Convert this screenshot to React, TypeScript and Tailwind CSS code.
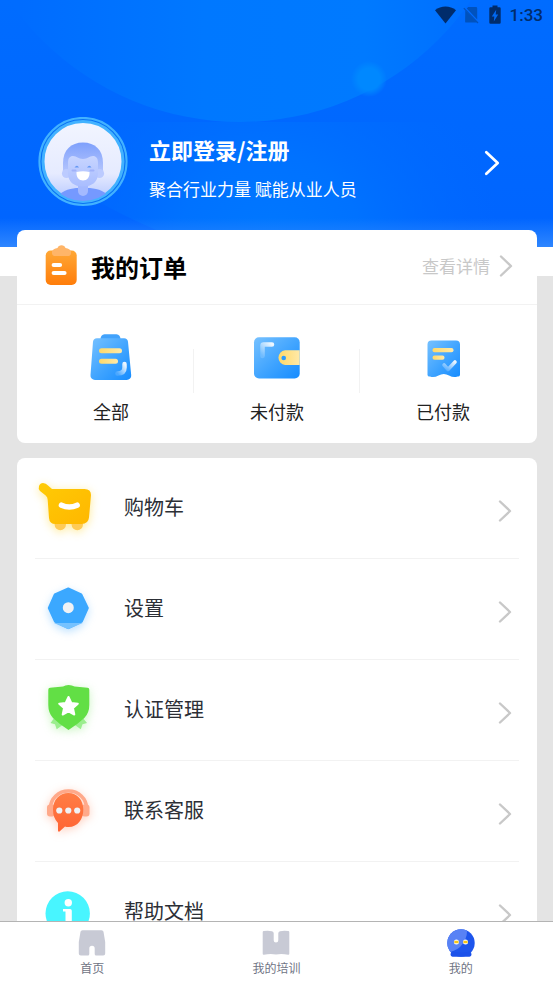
import React from 'react';

type IconProps = { className?: string };

const Chevron = ({ className }: IconProps) => (
  <svg viewBox="0 0 14 24" fill="none" stroke="currentColor" strokeLinecap="round" strokeLinejoin="round" className={className} aria-hidden="true">
    <path d="M2 2.5 12 12 2 21.5" strokeWidth="2.4" />
  </svg>
);

const StatusBar = () => (
  <div className="flex h-[30px] items-center justify-end pr-[10px] text-[#002c6b]">
    <svg viewBox="0 0 22 18" className="h-[18px] w-[22px]" fill="currentColor" aria-hidden="true">
      <path d="M10.500 17.500 0 4.200C6-.8 15-.8 21 4.200Z" />
    </svg>
    <svg viewBox="0 0 16 18" className="ml-[6px] h-[18px] w-4 text-[#0052bd]" fill="currentColor" aria-hidden="true">
      <path d="M5.200 1H13a1.200 1.200 0 0 1 1.200 1.200V13.500L3.800 2.500ZM2.300 4.500 13.800 16.300a1 1 0 0 1-.8.300H3.300a1.200 1.200 0 0 1-1.200-1.200Z" />
      <path d="M.8 2.200 15 17" stroke="currentColor" strokeWidth="1.200" />
    </svg>
    <svg viewBox="0 0 14 20" className="ml-[9px] h-5 w-[14px]" aria-hidden="true">
      <path d="M4.500.500h5v1.800h2a1.200 1.200 0 0 1 1.200 1.200v14a1.200 1.200 0 0 1-1.200 1.200h-9a1.200 1.200 0 0 1-1.200-1.200v-14a1.200 1.200 0 0 1 1.200-1.200h2Z" fill="currentColor" />
      <path d="M8.200 4.800 3.800 11.500H6.300L5.800 16.500 10.200 9.500H7.700Z" fill="#0068f0" />
    </svg>
    <span className="ml-2 font-['Roboto',sans-serif] text-[17px] font-medium leading-5">1:33</span>
  </div>
);

const HeaderBackdrop = () => (
  <svg viewBox="0 0 553 247" preserveAspectRatio="none" className="absolute inset-0 h-full w-full" aria-hidden="true">
    <defs>
      <linearGradient id="sky" x1="0" y1="0" x2="0" y2="1">
        <stop offset="0" stopColor="#006cff" />
        <stop offset="1" stopColor="#0064ff" />
      </linearGradient>
      <linearGradient id="disc" gradientUnits="userSpaceOnUse" x1="20" y1="0" x2="480" y2="0">
        <stop offset="0" stopColor="#006cff" />
        <stop offset=".4" stopColor="#0078ff" />
        <stop offset=".75" stopColor="#007aff" />
        <stop offset="1" stopColor="#006eff" />
      </linearGradient>
      <radialGradient id="glow" gradientUnits="userSpaceOnUse" cx="270" cy="247" r="230">
        <stop offset="0" stopColor="#0078ff" />
        <stop offset=".4" stopColor="#0072ff" />
        <stop offset="1" stopColor="#006aff" stopOpacity="0" />
      </radialGradient>
      <radialGradient id="spot">
        <stop offset="0" stopColor="#0088ff" />
        <stop offset=".6" stopColor="#0088ff" />
        <stop offset="1" stopColor="#0088ff" stopOpacity="0" />
      </radialGradient>
      <linearGradient id="fade" x1="0" y1="0" x2="0" y2="1">
        <stop offset="0" stopColor="#2e86ff" stopOpacity="0" />
        <stop offset="1" stopColor="#2e86ff" />
      </linearGradient>
    </defs>
    <rect width="553" height="247" fill="url(#sky)" />
    <circle cx="240" cy="-158" r="280" fill="url(#disc)" />
    <path d="M0 128Q60 192 180 240V247H553V122H0Z" fill="url(#glow)" />
    <circle cx="369" cy="79" r="18" fill="url(#spot)" />
    <rect y="218" width="553" height="29" fill="url(#fade)" />
  </svg>
);

const Avatar = () => (
  <svg viewBox="0 0 90 90" className="h-[90px] w-[90px] shrink-0" role="img" aria-label="头像">
    <defs>
      <linearGradient id="face-bg" x1="0" y1="0" x2="0" y2="1">
        <stop offset="0" stopColor="#f2f5ff" />
        <stop offset=".65" stopColor="#e6ebff" />
        <stop offset="1" stopColor="#b4c6ff" />
      </linearGradient>
      <linearGradient id="hair" x1="0" y1="0" x2="0" y2="1">
        <stop offset="0" stopColor="#7ea0fc" />
        <stop offset="1" stopColor="#b3c4fd" />
      </linearGradient>
      <linearGradient id="skin" x1="0" y1="0" x2="0" y2="1">
        <stop offset="0" stopColor="#c8d5ff" />
        <stop offset="1" stopColor="#a9bdff" />
      </linearGradient>
      <clipPath id="face-clip">
        <circle cx="45" cy="44.500" r="39.500" />
      </clipPath>
    </defs>
    <circle cx="45" cy="44.500" r="43.600" fill="#0872f4" stroke="#42b2ff" strokeWidth="2" />
    <circle cx="45" cy="44.500" r="40" fill="url(#face-bg)" stroke="#42b2ff" strokeWidth="3" />
    <g clipPath="url(#face-clip)">
      <path d="M19 83c2-9 12-11 19-12h14c8 1 17 3 20 12v7H19Z" fill="#7599ff" />
      <path d="M40 62h10v12a5 5 0 0 1-10 0Z" fill="#a4b9ff" />
      <path d="M25 54V46c0-13 8-20.500 20-20.500S65 33 65 46v8Z" fill="url(#hair)" />
      <circle cx="28.500" cy="56.500" r="4.600" fill="#bccbff" />
      <circle cx="61.500" cy="56.500" r="4.600" fill="#bccbff" />
      <path d="M30 46c0-5 2-7 5-7 4 0 5 3 10 3s6-3 10-3c3 0 5 2 5 7v10c0 9-6 13.500-15 13.500S30 65 30 56Z" fill="url(#skin)" />
      <path d="M36.500 50.500q2.500-3.500 4.500 0ZM49 50.500q2.500-3.500 4.500 0Z" fill="#6598f4" />
      <path d="M34.500 53.500h3M52.500 53.500h3" stroke="#a0b2fa" strokeWidth="2" strokeLinecap="round" />
      <path d="M38.500 55q6.500-1.500 13 0c.5 5-2.500 8.500-6.500 8.500s-7-3.500-6.500-8.500Z" fill="#fff" />
    </g>
  </svg>
);

const OrderIcon = ({ className }: IconProps) => (
  <svg viewBox="0 0 32 40" className={className} aria-hidden="true">
    <defs>
      <linearGradient id="order" x1="0" y1="0" x2="0" y2="1">
        <stop offset="0" stopColor="#ffa836" />
        <stop offset="1" stopColor="#ff7d0a" />
      </linearGradient>
    </defs>
    <rect x=".7" y="5.500" width="31" height="34.500" rx="5" fill="url(#order)" />
    <path d="M9 11Q6.500 10 7 6.500 8 3.500 12.500 3q1-2.800 4-2.800t4 2.800q4.500.5 5.500 3.500Q26.500 10 24 11Z" fill="#ffb568" />
    <path d="M8.700 20h6.300M8.700 28h10.800" stroke="#fff" strokeWidth="4.200" strokeLinecap="round" />
  </svg>
);

const BlueDefs = ({ id }: { id: string }) => (
  <defs>
    <linearGradient id={id} x1="0" y1="0" x2="1" y2="1">
      <stop offset="0" stopColor="#76c1ff" />
      <stop offset=".55" stopColor="#3ea3ff" />
      <stop offset="1" stopColor="#168cff" />
    </linearGradient>
    <linearGradient id={`${id}-line`}>
      <stop offset="0" stopColor="#ffd968" />
      <stop offset="1" stopColor="#ffe9a8" />
    </linearGradient>
    <linearGradient id={`${id}-shine`} x1="1" y1="0" x2="0" y2="1">
      <stop offset="0" stopColor="#fff" stopOpacity=".9" />
      <stop offset="1" stopColor="#fff" stopOpacity=".15" />
    </linearGradient>
  </defs>
);

const AllIcon = () => (
  <svg viewBox="1 0 60 60" className="h-[60px] w-[60px]" aria-hidden="true">
    <BlueDefs id="all" />
    <path d="M20.500 14.500c0-3 1.500-5.200 4-5.200h12c2.500 0 4 2.200 4 5.200Z" fill="#41a2fc" />
    <path d="M17 13.300h27a4 4 0 0 1 4 3.500L51.200 50a4.500 4.500 0 0 1-4.500 5H15a4.500 4.500 0 0 1-4.500-5L13 16.800a4 4 0 0 1 4-3.500Z" fill="url(#all)" />
    <rect x="19" y="23.300" width="23" height="5" rx="2.500" fill="url(#all-line)" />
    <rect x="19" y="33.700" width="19" height="5" rx="2.500" fill="url(#all-line)" />
    <path d="M44.500 39v3.500c0 4-2 6-7 6" fill="none" stroke="url(#all-shine)" strokeWidth="4.500" strokeLinecap="round" />
  </svg>
);

const UnpaidIcon = () => (
  <svg viewBox="0 0 60 60" className="h-[60px] w-[60px]" aria-hidden="true">
    <BlueDefs id="unpaid" />
    <rect x="7" y="12.300" width="45.700" height="41.200" rx="5" fill="url(#unpaid)" />
    <path d="M52.700 25.300V40H38a7.400 7.400 0 0 1 0-14.700Z" fill="url(#unpaid-line)" />
    <circle cx="36.700" cy="33" r="2.300" fill="#2b9cff" />
    <path d="M15.500 31V20.500q0-1 1-1H25" fill="none" stroke="url(#unpaid-shine)" strokeWidth="4.500" strokeLinecap="round" />
  </svg>
);

const PaidIcon = () => (
  <svg viewBox="-1 0 60 60" className="h-[60px] w-[60px]" aria-hidden="true">
    <BlueDefs id="paid" />
    <path d="M17.500 15.500H42a4 4 0 0 1 4 4V50Q45.500 52 43.500 51.500 39.500 53 35 50.500 29.800 47.500 24.500 50.500 20 53 16 51.500 14 52 13.500 50V19.500a4 4 0 0 1 4-4Z" fill="url(#paid)" />
    <rect x="18.500" y="23" width="21" height="4.200" rx="2" fill="url(#paid-line)" />
    <rect x="18.500" y="30.500" width="12" height="4.200" rx="2" fill="url(#paid-line)" />
    <path d="m30 40 4 4.500 7-7.500" fill="none" stroke="url(#paid-shine)" strokeWidth="3.600" strokeLinecap="round" strokeLinejoin="round" />
  </svg>
);

const CartIcon = () => (
  <svg viewBox="0 0 70 70" className="h-[70px] w-[70px] drop-shadow-[0_2px_5px_#ffcc0066]" aria-hidden="true">
    <defs>
      <linearGradient id="cart" x1="0" y1="0" x2="1" y2="1">
        <stop offset="0" stopColor="#ffcb05" />
        <stop offset="1" stopColor="#ffb700" />
      </linearGradient>
    </defs>
    <circle cx="30.300" cy="51.500" r="5.700" fill="#ffcb55" />
    <circle cx="47.300" cy="51.500" r="5.700" fill="#ffcb55" />
    <path d="M13 10q3 0 5 2.500l4 3.500h32.500q6.500 0 6.500 6l-2 22.500q-.7 6.500-7.500 6.500H25.500q-6 0-6.500-6L17.700 27q0-3-2-4.500L10 18q-2-2-1-5 1.200-3 4-3Z" fill="url(#cart)" />
    <path d="M31.500 32.200q7.800 3.600 15.600 0" fill="none" stroke="#fff" strokeWidth="5.600" strokeLinecap="round" />
  </svg>
);

const SettingsIcon = () => (
  <svg viewBox="0 0 70 70" className="h-[70px] w-[70px] drop-shadow-[0_3px_4px_#3aa5ff55]" aria-hidden="true">
    <path d="m38.300 14.500 13 6 6.500 13.500-6 13.500-13.500 6.500L25 47.500 18.800 34l6-13.500Z" fill="#3ba8ff" stroke="#3ba8ff" strokeWidth="2" strokeLinejoin="round" />
    <path d="M24 49h28.500l-14.200 6.200Z" fill="#76c2ff" />
    <circle cx="38.300" cy="33.700" r="5.500" fill="#f0f2f5" />
  </svg>
);

const ShieldIcon = () => (
  <svg viewBox="0 0 70 70" className="h-[70px] w-[70px] drop-shadow-[0_2px_5px_#5fe04455]" aria-hidden="true">
    <path d="m25 42-4.500 6 4.500 1.200 1.700 5L34 49ZM52 42l5 6-4.500 1.200-1.700 5L43.500 49Z" fill="#9bee8e" />
    <path d="M38.500 10q3.500 0 6 1.500l13 1.300q1.800.2 1.800 2V30q0 8-5 13-7 6.500-15.800 12-8.800-5.500-15.500-12-4.700-5-4.700-13V14.800q0-1.800 1.800-2l13-1.300q2-1.500 5.400-1.500Z" fill="#62df45" />
    <path d="m38.500 22 2.800 5.900 6.500.8-4.800 4.400 1.300 6.400-5.800-3.200-5.800 3.200 1.300-6.400-4.800-4.400 6.500-.8Z" fill="#fff" stroke="#fff" strokeWidth="2" strokeLinejoin="round" />
  </svg>
);

const ServiceIcon = () => (
  <svg viewBox="0 0 70 70" className="h-[70px] w-[70px] drop-shadow-[0_2px_5px_#ff6f3c55]" aria-hidden="true">
    <defs>
      <linearGradient id="service" x1="0" y1="0" x2="0" y2="1">
        <stop offset="0" stopColor="#ff7d45" />
        <stop offset="1" stopColor="#ff6433" />
      </linearGradient>
    </defs>
    <path d="M20.500 32a18 17 0 0 1 36 0" fill="none" stroke="#ffa98a" strokeWidth="3.600" />
    <rect x="17" y="28.500" width="8" height="12" rx="3" fill="#ffa98a" />
    <rect x="51.500" y="28.500" width="8" height="12" rx="3" fill="#ffa98a" />
    <path d="M38.300 17c9 0 15 7 15 16.500S48 51 38.500 51q-2 0-3.500-.5L29.500 55.500q-1.500.5-1.500-1V47q-5-5-5-13.500c0-9.500 6.300-16.500 15.300-16.500Z" fill="url(#service)" />
    <g fill="#f0f2f5">
      <circle cx="29.300" cy="34.500" r="3.100" />
      <circle cx="38.300" cy="34.500" r="3.100" />
      <circle cx="47.200" cy="34.500" r="3.100" />
    </g>
  </svg>
);

const HelpIcon = () => (
  <svg viewBox="0 0 70 70" className="h-[70px] w-[70px]" aria-hidden="true">
    <circle cx="37.700" cy="36.500" r="22.200" fill="#48f5ff" />
    <circle cx="38.300" cy="25.700" r="3.700" fill="#fff" />
    <path d="M33 32h7q1.800 0 1.800 1.800V46H44v3H32.500v-3h3V34.500H33Z" fill="#fff" />
  </svg>
);

const HomeTabIcon = () => (
  <svg viewBox="0 0 28 28" className="h-7 w-7" fill="#c8cad5" aria-hidden="true">
    <path d="M4.500 1.200h19q1.700 0 2 1.500L27.200 13v11.500q0 2-2 2h-7q-1.500 0-1.500-1.500v-5.500q0-2.700-2.700-2.700t-2.700 2.700V25q0 1.500-1.500 1.500h-7q-2 0-2-2V13L2.500 2.700q.3-1.500 2-1.500Z" />
  </svg>
);

const TrainingTabIcon = () => (
  <svg viewBox="0 0 28 28" className="h-7 w-7" fill="#c8cad5" aria-hidden="true">
    <path d="M1.800 2q4.700-.6 8.200.2 1.700.4 1.700 2v7q0 2.300 2.300 2.300t2.300-2.300v-7q0-1.600 1.700-2 3.500-.8 8.200-.2 1.100.1 1.100 1.200v21.500q0 1.200-1.200 1-6.600-1.200-12.100-.2-5.500-1-12.100.2-1.200.2-1.200-1V3.200q0-1.100 1.100-1.200Z" />
  </svg>
);

const MineTabIcon = () => (
  <svg viewBox="0 0 28 28" className="h-7 w-7" aria-hidden="true">
    <defs>
      <clipPath id="mine-clip">
        <circle cx="14" cy="14" r="13.700" />
      </clipPath>
    </defs>
    <circle cx="14" cy="14" r="13.700" fill="#1d55ec" />
    <path d="M20-1Q21 10 13 18 8 22 0 24V-1Z" fill="#5882f5" clipPath="url(#mine-clip)" />
    <path d="M5 22.500q9 2 18 0 1.500 1 1.500 3t-2 2.300h-17q-2-.3-2-2.300t1.500-3Z" fill="#1b51ea" />
    <circle cx="9.400" cy="13" r="2.500" fill="#fff" />
    <circle cx="18.500" cy="13" r="2.500" fill="#fff" />
    <path d="M7.300 13h4.200M16.400 13h4.200" stroke="#f7c516" strokeWidth="2.400" />
  </svg>
);

const orders = [
  { label: '全部', Icon: AllIcon },
  { label: '未付款', Icon: UnpaidIcon },
  { label: '已付款', Icon: PaidIcon },
];

const menu = [
  { label: '购物车', Icon: CartIcon },
  { label: '设置', Icon: SettingsIcon },
  { label: '认证管理', Icon: ShieldIcon },
  { label: '联系客服', Icon: ServiceIcon },
  { label: '帮助文档', Icon: HelpIcon },
];

const tabs = [
  { label: '首页', Icon: HomeTabIcon, active: false },
  { label: '我的培训', Icon: TrainingTabIcon, active: false },
  { label: '我的', Icon: MineTabIcon, active: true },
];

const App = () => {
  return (
    <div className="flex h-screen flex-col bg-white font-['Noto_Sans_CJK_SC',sans-serif]">
      <div className="min-h-0 flex-1 overflow-hidden bg-[#e4e4e4]">
        <header className="relative h-[247px] bg-[#0068ff]">
          <HeaderBackdrop />
          <div className="relative">
            <StatusBar />
            <button type="button" className="mt-[87px] flex w-full items-center pl-[38px] pr-[53px] text-left text-white">
              <Avatar />
              <span className="ml-[21px] flex-1 pt-3">
                <span className="block text-[22px] font-bold leading-8">立即登录/注册</span>
                <span className="mt-[10px] block text-[17px] leading-7">聚合行业力量 赋能从业人员</span>
              </span>
              <Chevron className="mt-[2px] h-7 w-4" />
            </button>
          </div>
        </header>
        <div className="h-[29px] bg-white" />

        <main className="relative -mt-[46px] space-y-[15px] px-4 pl-[17px]">
          <section className="rounded-lg bg-white">
            <div className="flex h-[74px] items-center pl-7 pr-6">
              <OrderIcon className="mb-1 h-10 w-8" />
              <h2 className="ml-[14px] flex-1 text-[24px] font-bold leading-9 text-black">我的订单</h2>
              <a href="#orders" className="mb-[2px] flex items-center gap-[9px] text-[17px] leading-6 text-[#c8c8c8]">
                查看详情
                <Chevron className="h-6 w-[14px]" />
              </a>
            </div>
            <div className="grid grid-cols-3 border-t border-[#f2f2f2] px-[11px] pb-[18px] pt-5">
              {orders.map(({ label, Icon }, i) => (
                <div key={label} className="relative">
                  {i > 0 && <span className="absolute -left-px top-6 h-11 w-px bg-[#f2f2f2]" />}
                  <button type="button" className="flex w-full flex-col items-center">
                    <Icon />
                    <span className="mt-3 text-[18px] leading-7 text-[#222]">{label}</span>
                  </button>
                </div>
              ))}
            </div>
          </section>

          <section className="rounded-lg bg-white px-[18px]">
            {menu.map(({ label, Icon }) => (
              <button
                key={label}
                type="button"
                className="flex w-full items-center border-b border-[#f2f2f2] py-[15px] pr-[7px] text-left"
              >
                <span className="-ml-[5px]">
                  <Icon />
                </span>
                <span className="mb-[2px] ml-6 flex-1 text-[20px] leading-5 text-[#2c2f36]">{label}</span>
                <Chevron className="mt-[5px] h-6 w-[14px] text-[#c8c8c8]" />
              </button>
            ))}
          </section>
        </main>
      </div>

      <nav className="grid h-[62px] grid-cols-3 border-t border-[#b4b4b4] bg-white pt-[7px]">
        {tabs.map(({ label, Icon, active }) => (
          <button
            key={label}
            type="button"
            aria-current={active ? 'page' : undefined}
            className="flex flex-col items-center text-[12px] leading-[22px] text-[#6f7484]"
          >
            <Icon />
            {label}
          </button>
        ))}
      </nav>
    </div>
  );
};

export default App;
